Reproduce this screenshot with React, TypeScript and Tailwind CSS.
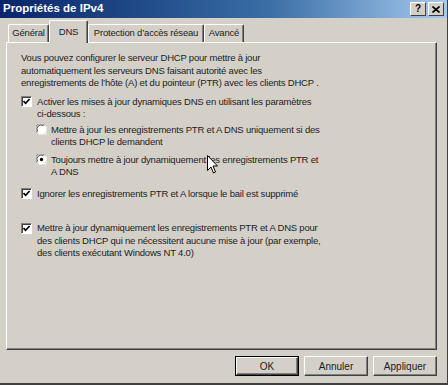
import React from 'react'

function Check({ checked }: { checked?: boolean }) {
  return (
    <span className="flex h-[11px] w-[11px] shrink-0 items-center justify-center border-t border-l border-t-[#808080] border-l-[#808080] border-r border-b border-r-white border-b-white bg-white shadow-[inset_1px_1px_0_#404040]">
      {checked && (
        <svg width="9" height="9" viewBox="0 0 9 9">
          <path d="M1.5 4.2 L3.6 6.3 L7.6 2" stroke="#000" strokeWidth="1.7" fill="none" />
        </svg>
      )}
    </span>
  )
}

function Radio({ checked }: { checked?: boolean }) {
  return (
    <svg width="11" height="11" viewBox="0 0 12 12" className="shrink-0">
      <circle cx="6" cy="6" r="5.5" fill="#fff" />
      <path d="M1.1 9 A5.5 5.5 0 0 1 9 1.1" stroke="#808080" strokeWidth="1" fill="none" />
      <path d="M2 8.3 A4.5 4.5 0 0 1 8.3 2" stroke="#404040" strokeWidth="1" fill="none" />
      <path d="M10.9 3 A5.5 5.5 0 0 1 3 10.9" stroke="#fff" strokeWidth="1" fill="none" />
      {checked && <circle cx="6" cy="6" r="1.8" fill="#000" />}
    </svg>
  )
}

function Tab({ label, width, selected }: { label: string; width: string; selected?: boolean }) {
  if (selected) {
    return (
      <div
        className={`relative z-10 -mb-px flex h-[23px] ${width} items-start justify-center rounded-t-[2px] border-t border-l border-t-white border-l-white border-r border-r-[#404040] bg-[#d4d0c8] pt-[4px] shadow-[inset_-1px_0_0_#808080]`}
      >
        {label}
      </div>
    )
  }
  return (
    <div
      className={`flex h-[18px] ${width} items-center justify-center rounded-t-[2px] border-t border-l border-t-white border-l-white border-r border-r-[#404040] pb-[1px] shadow-[inset_-1px_0_0_#808080]`}
    >
      {label}
    </div>
  )
}

function Btn({ label, isDefault }: { label: string; isDefault?: boolean }) {
  return (
    <div className={`h-[20px] w-[64px] ${isDefault ? 'border border-black' : ''}`}>
      <div className="flex h-full w-full items-center justify-center border-t border-l border-t-white border-l-white border-r border-b border-r-[#404040] border-b-[#404040] shadow-[inset_-1px_-1px_0_#808080]">
        {label}
      </div>
    </div>
  )
}

export default function App() {
  return (
    <div className="relative flex h-[385px] w-[448px] flex-col overflow-hidden border-r border-b-2 border-r-[#404040] border-b-[#404040] bg-[#d4d0c8] font-['Liberation_Sans',Arial,sans-serif] text-[9.5px] tracking-[-0.2px] text-[#1c1c1c]">
      {/* title bar */}
      <div className="flex h-[18px] shrink-0 items-center justify-between bg-gradient-to-r from-[#0a246a] via-[#3a6ea5] via-60% to-[#a6caf0] pr-[3px] pl-[3px]">
        <span className="text-[11.5px] font-bold tracking-normal text-white">Propriétés de IPv4</span>
        <div className="flex gap-[2px]">
          <div className="flex h-[14px] w-[16px] items-center justify-center border-t border-l border-t-white border-l-white border-r border-b border-r-[#404040] border-b-[#404040] bg-[#d4d0c8] text-[10px] font-bold leading-none tracking-normal text-black">
            ?
          </div>
          <div className="flex h-[14px] w-[16px] items-center justify-center border-t border-l border-t-white border-l-white border-r border-b border-r-[#404040] border-b-[#404040] bg-[#d4d0c8]">
            <svg width="8" height="7" viewBox="0 0 8 7">
              <path d="M0.5 0.5 L7.5 6.5 M7.5 0.5 L0.5 6.5" stroke="#000" strokeWidth="1.6" />
            </svg>
          </div>
        </div>
      </div>

      <div className="flex flex-1 flex-col pr-[10px] pl-[6px]">
        {/* tabs */}
        <div className="mt-[6px] flex h-[18px] items-end pl-[2px]">
          <Tab label="Général" width="w-[41px]" />
          <Tab label="DNS" width="w-[39px]" selected />
          <Tab label="Protection d’accès réseau" width="w-[116px]" />
          <Tab label="Avancé" width="w-[40px]" />
        </div>

        {/* panel */}
        <div className="h-[308px] border-t border-l border-t-white border-l-white border-r border-b border-r-[#404040] border-b-[#404040] pt-[9px] pl-[14px] leading-[12.5px] shadow-[inset_-1px_-1px_0_#808080]">
          <p>
            Vous pouvez configurer le serveur DHCP pour mettre à jour
            <br />
            automatiquement les serveurs DNS faisant autorité avec les
            <br />
            enregistrements de l’hôte (A) et du pointeur (PTR) avec les clients DHCP .
          </p>

          <div className="mt-[6px] flex gap-[5px]">
            <div className="flex h-[12.5px] items-center">
              <Check checked />
            </div>
            <div>
              Activer les mises à jour dynamiques DNS en utilisant les paramètres
              <br />
              ci-dessous :
            </div>
          </div>

          <div className="mt-[3px] flex gap-[4px] pl-[15px]">
            <div className="flex h-[12.5px] items-center">
              <Radio />
            </div>
            <div>
              Mettre à jour les enregistrements PTR et A DNS uniquement si des
              <br />
              clients DHCP le demandent
            </div>
          </div>

          <div className="mt-[5px] flex gap-[4px] pl-[15px]">
            <div className="flex h-[12.5px] items-center">
              <Radio checked />
            </div>
            <div>
              Toujours mettre à jour dynamiquement les enregistrements PTR et
              <br />A DNS
            </div>
          </div>

          <div className="mt-[9px] flex gap-[5px]">
            <div className="flex h-[12.5px] items-center">
              <Check checked />
            </div>
            <div>Ignorer les enregistrements PTR et A lorsque le bail est supprimé</div>
          </div>

          <div className="mt-[22px] flex gap-[5px]">
            <div className="flex h-[12.5px] items-center">
              <Check checked />
            </div>
            <div>
              Mettre à jour dynamiquement les enregistrements PTR et A DNS pour
              <br />
              des clients DHCP qui ne nécessitent aucune mise à jour (par exemple,
              <br />
              des clients exécutant Windows NT 4.0)
            </div>
          </div>
        </div>

        {/* buttons */}
        <div className="mt-[6px] flex justify-end gap-[5px] text-[10px] tracking-normal">
          <Btn label="OK" isDefault />
          <Btn label="Annuler" />
          <Btn label="Appliquer" />
        </div>
      </div>

      {/* mouse pointer */}
      <svg className="absolute top-[155px] left-[207px]" width="12" height="19" viewBox="0 0 12 19">
        <path d="M0.5 0.5 L0.5 15.5 L4 12 L6.5 18 L8.5 17 L6 11 L10.5 11 Z" fill="#fff" stroke="#000" strokeWidth="1" />
      </svg>
    </div>
  )
}
